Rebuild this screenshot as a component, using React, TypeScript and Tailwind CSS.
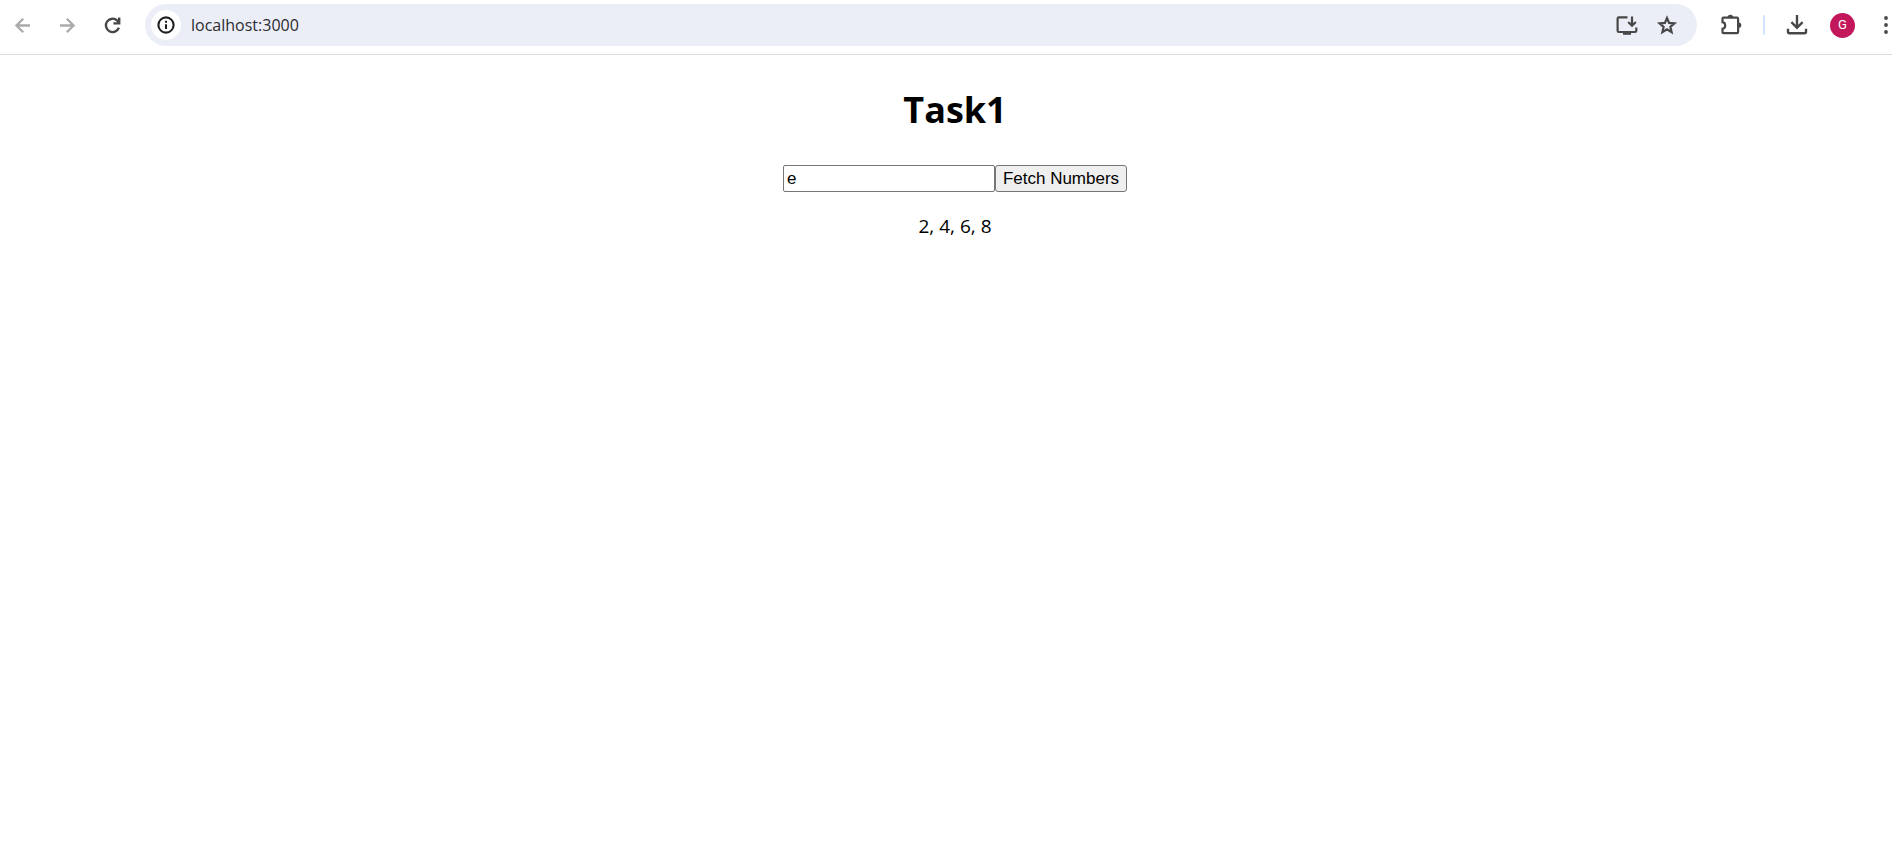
import { useState } from "react";

const iconButton = "flex shrink-0 items-center justify-center";

function BrowserToolbar() {
  return (
    <header className="flex h-[55px] items-start border-b border-[#dcdddf] bg-white pt-1 pl-3 text-[#474747]">
      <div className="flex h-[42px] min-w-0 flex-1 items-center">
        <nav aria-label="History" className="flex shrink-0 items-center gap-6">
          <button type="button" aria-label="Back" className={`${iconButton} size-[21px] text-[#ababab]`}>
            <svg width="21" height="21" viewBox="0 0 21 21" fill="none" stroke="currentColor" strokeWidth="2.3">
              <path d="M18 10.5H4.4M11.2 3.7L4.4 10.5L11.2 17.3" />
            </svg>
          </button>
          <button type="button" aria-label="Forward" className={`${iconButton} size-[21px] text-[#ababab]`}>
            <svg width="21" height="21" viewBox="0 0 21 21" fill="none" stroke="currentColor" strokeWidth="2.3">
              <path d="M3 10.5H16.6M9.8 3.7L16.6 10.5L9.8 17.3" />
            </svg>
          </button>
          <button type="button" aria-label="Reload" className={`${iconButton} size-[21px]`}>
            <svg width="21" height="21" viewBox="0 0 21 21" fill="none" stroke="currentColor" strokeWidth="2.4">
              <path d="M16.9 12.6A6.7 6.7 0 1 1 15.3 5.6L16.6 7.2" />
              <path d="M17.2 2.6V8.4H11.4" />
            </svg>
          </button>
        </nav>

        <div className="ml-[22px] flex h-[42px] min-w-0 flex-1 items-center rounded-full bg-[#ebeef7] pr-[19px] pl-[6px]">
          <button
            type="button"
            aria-label="View site information"
            className={`${iconButton} size-[30px] rounded-full bg-white text-[#1f1f1f]`}
          >
            <svg width="18" height="18" viewBox="0 0 18 18" fill="none" stroke="currentColor" strokeWidth="2.1">
              <circle cx="9" cy="9" r="7.6" />
              <path d="M9 8.2V13M9 4.8V6.8" />
            </svg>
          </button>
          <input
            type="text"
            aria-label="Address"
            defaultValue="localhost:3000"
            className="ml-[10px] h-[30px] min-w-0 flex-1 bg-transparent font-['Open_Sans',sans-serif] text-[16px] text-[#2b2c30] outline-none"
          />
          <div className="flex items-center gap-[18px]">
            <button type="button" aria-label="Install app" className={`${iconButton} size-[22px]`}>
              <svg width="22" height="22" viewBox="0 0 22 22" fill="none" stroke="currentColor" strokeWidth="2.2">
                <path d="M11.5 3.4H2.9Q1.6 3.4 1.6 4.7V16.7Q1.6 18 2.9 18H19Q20.3 18 20.3 16.7V13.4" />
                <path d="M16 2.6V11.4M12.2 8L16 11.8L19.8 8" />
                <path d="M7 18H15V20.8H7Z" fill="currentColor" stroke="none" />
              </svg>
            </button>
            <button type="button" aria-label="Bookmark this tab" className={`${iconButton} size-[22px]`}>
              <svg width="22" height="22" viewBox="0 0 22 22" fill="none" stroke="currentColor" strokeWidth="2.2">
                <path d="M11 4L13.1 8.9L18.4 9.4L14.4 12.9L15.6 18.2L11 15.4L6.4 18.2L7.6 12.9L3.6 9.4L8.9 8.9Z" />
              </svg>
            </button>
          </div>
        </div>

        <div className="ml-6 flex shrink-0 items-center">
          <button type="button" aria-label="Extensions" className={`${iconButton} size-[22px]`}>
            <svg width="22" height="22" viewBox="0 0 22 22" fill="none" stroke="currentColor" strokeWidth="2.2">
              <path d="M2.4 3.7H16Q17.1 3.7 17.1 4.8V18.1Q17.1 19.2 16 19.2H2.4Q1.5 19.2 1.5 18.1V14.8C5.1 14.3 5.1 8.7 1.5 8.2V4.8Q1.5 3.7 2.4 3.7Z" />
              <path d="M6.6 3.5A2.8 2.8 0 0 1 12.2 3.5ZM17.5 8.4A2.8 2.8 0 0 1 17.5 14Z" fill="currentColor" stroke="none" />
            </svg>
          </button>
          <span className="ml-5 h-5 w-[2px] rounded-full bg-[#d3e3fd]" />
          <button type="button" aria-label="Downloads" className={`${iconButton} ml-[21px] size-[22px]`}>
            <svg width="22" height="22" viewBox="0 0 22 22" fill="none" stroke="currentColor" strokeWidth="2.4">
              <path d="M11 0.9V13.4M5.4 8.2L11 13.8L16.6 8.2" />
              <path d="M2 14.8V17.8Q2 19.3 3.5 19.3H18.5Q20 19.3 20 17.8V14.8" />
            </svg>
          </button>
          <button
            type="button"
            aria-label="Profile"
            className={`${iconButton} ml-[22px] size-[25px] rounded-full bg-[#c2185b] font-[Roboto,sans-serif] text-[13px] text-white`}
          >
            G
          </button>
          <button type="button" aria-label="Menu" className={`${iconButton} ml-6 w-[13px]`}>
            <svg width="4" height="20" viewBox="0 0 4 20" fill="currentColor">
              <circle cx="2" cy="3" r="1.9" />
              <circle cx="2" cy="10" r="1.9" />
              <circle cx="2" cy="17" r="1.9" />
            </svg>
          </button>
        </div>
      </div>
    </header>
  );
}

export default function App() {
  const [query, setQuery] = useState("e");
  const numbers = [2, 4, 6, 8];

  return (
    <div className="min-h-screen bg-white">
      <BrowserToolbar />
      <main className="flex flex-col items-center pt-7 pl-[18px] font-['Open_Sans',sans-serif] text-black">
        <h1 className="text-[36px] leading-[54px] font-bold">Task1</h1>
        <form
          className="mt-7 flex font-['Liberation_Sans',sans-serif] text-[17px]"
          onSubmit={(event) => event.preventDefault()}
        >
          <input
            type="text"
            aria-label="Number type"
            value={query}
            onChange={(event) => setQuery(event.target.value)}
            className="h-[27px] w-[212px] rounded-[2px] border border-[#767676] bg-white px-[3px]"
          />
          <button
            type="submit"
            className="h-[27px] rounded-[3px] border border-[#767676] bg-[#efefef] px-[7px] leading-[25px]"
          >
            Fetch Numbers
          </button>
        </form>
        <p className="mt-5 text-[19px] leading-7">{numbers.join(", ")}</p>
      </main>
    </div>
  );
}
